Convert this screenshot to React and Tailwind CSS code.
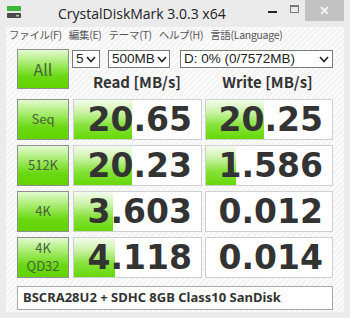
const greenBtn =
  'flex flex-col items-center justify-center border border-[#8f8f8f] bg-[linear-gradient(180deg,#e2fad0_0%,#a6ec6c_35%,#6ad812_70%,#62d400_100%)] text-[#476338] leading-[18px]'

const greenBar = 'bg-[linear-gradient(180deg,#f4fcee_0%,#cdf3aa_30%,#86e23a_65%,#66d808_100%)]'

function Select({ w, children }) {
  return (
    <div
      className={`flex h-[18px] items-center justify-between gap-[2px] border border-[#7a7a7a] bg-white pl-[3px] pr-[3px] font-['Liberation_Sans',sans-serif] text-[13.5px] leading-none text-[#222] ${w}`}
    >
      <span className="whitespace-nowrap">{children}</span>
      <svg className="shrink-0" width="10" height="7" viewBox="0 0 10 7">
        <path d="M1 1l4 4.5L9 1" fill="none" stroke="#222" strokeWidth="1.6" />
      </svg>
    </div>
  )
}

function Cell({ value, bar, w }) {
  return (
    <div className={`relative h-[41px] border border-[#cfcfcf] bg-white ${w}`}>
      <div className={`absolute inset-y-0 left-0 ${greenBar}`} style={{ width: bar }} />
      <div className="relative flex h-full items-center justify-end pr-[9px] font-['DejaVu_Sans',sans-serif] text-[33px] font-bold leading-none text-[#333]">
        {value}
      </div>
    </div>
  )
}

const rows = [
  { label: ['Seq'], read: '20.65', rb: 58, write: '20.25', wb: 58 },
  { label: ['512K'], read: '20.23', rb: 58, write: '1.586', wb: 30 },
  { label: ['4K'], read: '3.603', rb: 39, write: '0.012', wb: 0 },
  { label: ['4K', 'QD32'], read: '4.118', rb: 41, write: '0.014', wb: 0 },
]

export default function App() {
  return (
    <div className="flex h-[318px] w-[350px] flex-col bg-[#ebebeb] font-['Noto_Sans_CJK_JP',sans-serif]">
      <div className="relative flex h-[27px] items-center">
        <svg className="absolute left-[7px] top-[6px]" width="14" height="13" viewBox="0 0 14 13">
          <rect x="0" y="0" width="14" height="5" fill="#3cb83c" />
          <rect x="0" y="7" width="14" height="5" rx="1" fill="#4a4a4a" />
          <rect x="9" y="9" width="3" height="1.5" fill="#9be36b" />
        </svg>
        <div className="pl-[58px] font-['Open_Sans',sans-serif] text-[14px] text-[#222]">
          CrystalDiskMark 3.0.3 x64
        </div>
        <div className="absolute left-[268px] top-[11px] h-[2px] w-[9px] bg-[#222]" />
        <div className="absolute left-[290px] top-[5px] h-[8px] w-[9px] border border-[#777] border-t-2" />
        <div className="absolute right-[6px] top-0 flex h-[21px] w-[39px] items-center justify-center bg-[#c2c2c2]">
          <svg width="9" height="9" viewBox="0 0 9 9">
            <path d="M1 1l7 7M8 1L1 8" stroke="#fff" strokeWidth="1.6" />
          </svg>
        </div>
      </div>
      <div className="mx-[6px] flex h-[285px] flex-col bg-[repeating-linear-gradient(135deg,#fbfbfb_0px,#fbfbfb_2px,#f3f3f3_2px,#f3f3f3_4px)] pl-[11px]">
        <div className="-ml-[8px] flex h-[16px] items-center gap-[7px] whitespace-nowrap text-[10.5px] tracking-[-0.3px] text-[#555]">
          <span>ファイル(F)</span>
          <span>編集(E)</span>
          <span>テーマ(T)</span>
          <span>ヘルプ(H)</span>
          <span>言語(Language)</span>
        </div>
        <div className="mt-[6px] flex gap-[3px]">
          <div className={`h-[40px] w-[52px] text-[16px] ${greenBtn}`}>All</div>
          <div className="flex flex-col">
            <div className="mt-[1px] flex">
              <Select w="w-[28px]">5</Select>
              <Select w="ml-[8px] w-[62px]">500MB</Select>
              <Select w="ml-[10px] w-[153px]">D: 0% (0/7572MB)</Select>
            </div>
            <div className="mt-[3px] flex text-[15px] font-bold text-[#333]">
              <div className="w-[130px] text-center">Read [MB/s]</div>
              <div className="w-[131px] text-center">Write [MB/s]</div>
            </div>
          </div>
        </div>
        <div className="mt-[5px] flex flex-col gap-[5px]">
          {rows.map((r) => (
            <div key={r.read} className="flex">
              <div className={`h-[41px] w-[52px] text-[13px] ${greenBtn}`}>
                {r.label.map((l) => (
                  <span key={l}>{l}</span>
                ))}
              </div>
              <div className="ml-[4px]">
                <Cell value={r.read} bar={r.rb} w="w-[129px]" />
              </div>
              <div className="ml-[3px]">
                <Cell value={r.write} bar={r.wb} w="w-[128px]" />
              </div>
            </div>
          ))}
        </div>
        <div className="mt-[8px] flex h-[24px] w-[316px] items-center border border-[#a8a8a8] bg-white pl-[5px] font-['Noto_Sans',sans-serif] text-[13px] font-bold text-[#333]">
          BSCRA28U2 + SDHC 8GB Class10 SanDisk
        </div>
      </div>
    </div>
  )
}
